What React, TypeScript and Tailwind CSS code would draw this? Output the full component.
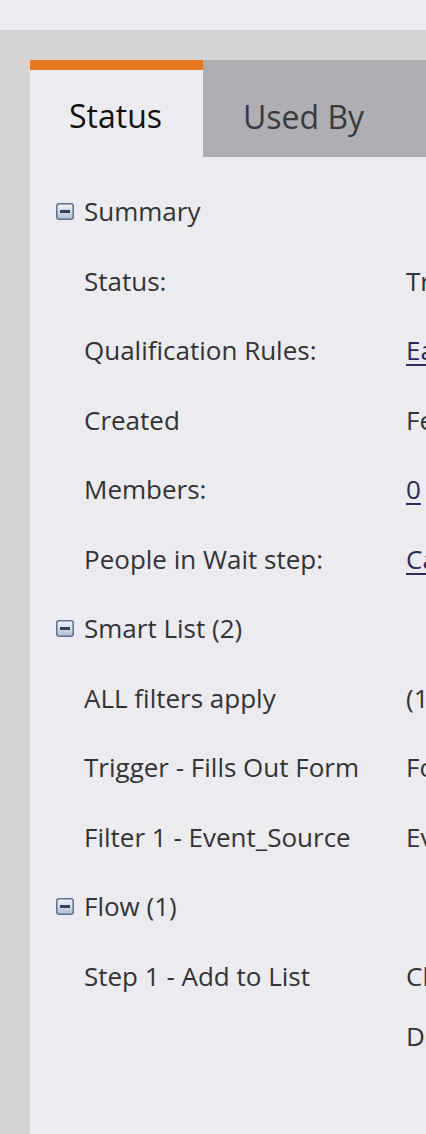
import React from "react";

type Row = { kind: "section"; label: string } | { kind: "row"; label: string; values: { text: string; link?: boolean }[] };

const ROWS: Row[] = [
  { kind: "section", label: "Summary" },
  { kind: "row", label: "Status:", values: [{ text: "Triggered" }] },
  { kind: "row", label: "Qualification Rules:", values: [{ text: "Each person can run through the flow once", link: true }] },
  { kind: "row", label: "Created", values: [{ text: "Feb 12, 2024" }] },
  { kind: "row", label: "Members:", values: [{ text: "0", link: true }] },
  { kind: "row", label: "People in Wait step:", values: [{ text: "Calculate", link: true }] },
  { kind: "section", label: "Smart List (2)" },
  { kind: "row", label: "ALL filters apply", values: [{ text: "(1 trigger, 1 filter)" }] },
  { kind: "row", label: "Trigger - Fills Out Form", values: [{ text: "Form Name" }] },
  { kind: "row", label: "Filter 1 - Event_Source", values: [{ text: "Event_Source" }] },
  { kind: "section", label: "Flow (1)" },
  { kind: "row", label: "Step 1 - Add to List", values: [{ text: "Choice 1" }, { text: "Default" }] },
];

function CollapseIcon() {
  return (
    <svg width="18" height="17" viewBox="0 0 18 17" className="shrink-0">
      <defs>
        <linearGradient id="cg" x1="0" y1="0" x2="0" y2="1">
          <stop offset="0" stopColor="#f2f5fa" />
          <stop offset="1" stopColor="#aebdd2" />
        </linearGradient>
      </defs>
      <rect x="0.75" y="0.75" width="16.5" height="15.5" rx="2.5" fill="url(#cg)" stroke="#5f7290" strokeWidth="1.5" />
      <rect x="4" y="7" width="10" height="3" fill="#34435c" />
    </svg>
  );
}

export default function App() {
  return (
    <div className="w-[426px] h-[1134px] overflow-hidden bg-[#d4d4d5] flex flex-col" style={{ fontFamily: '"Open Sans", "Noto Sans", sans-serif' }}>
      <div className="h-[30px] shrink-0 bg-[#ededf1]" />
      <div className="flex-1 pl-[30px] pt-[30px] flex">
        <div className="flex-1 bg-[#ebebf0] flex flex-col min-w-0">
          <div className="flex h-[97px] shrink-0">
            <div className="w-[173px] border-t-[10px] border-[#e67821] flex items-center justify-center text-[32px] text-[#111] pt-[5px] pr-[2px]">Status</div>
            <div className="flex-1 bg-[#aeaeb3] flex items-center pl-[40px] text-[32px] text-[#3a3a3d] whitespace-nowrap pt-[17px]">Used By</div>
          </div>
          <div className="pt-[20px]">
            {ROWS.map((r, i) =>
              r.kind === "section" ? (
                <div key={i} className="h-[69.5px] flex items-center gap-[10px] pl-[26px] text-[26px] text-[#333336] whitespace-nowrap">
                  <CollapseIcon />
                  <span>{r.label}</span>
                </div>
              ) : (
                <div key={i} className="h-[69.5px] flex items-start whitespace-nowrap text-[26px] text-[#333336]">
                  <div className="w-[376px] shrink-0 pl-[54px] h-[69.5px] flex items-center">{r.label}</div>
                  <div className="flex flex-col">
                    {r.values.map((v, j) => (
                      <div key={j} className="h-[60px] flex items-center first:h-[69.5px] first:-mb-[4.75px]">
                        <span className={v.link ? "underline text-[#2b2a5c] underline-offset-[4px]" : ""}>{v.text}</span>
                      </div>
                    ))}
                  </div>
                </div>
              )
            )}
          </div>
        </div>
      </div>
    </div>
  );
}
